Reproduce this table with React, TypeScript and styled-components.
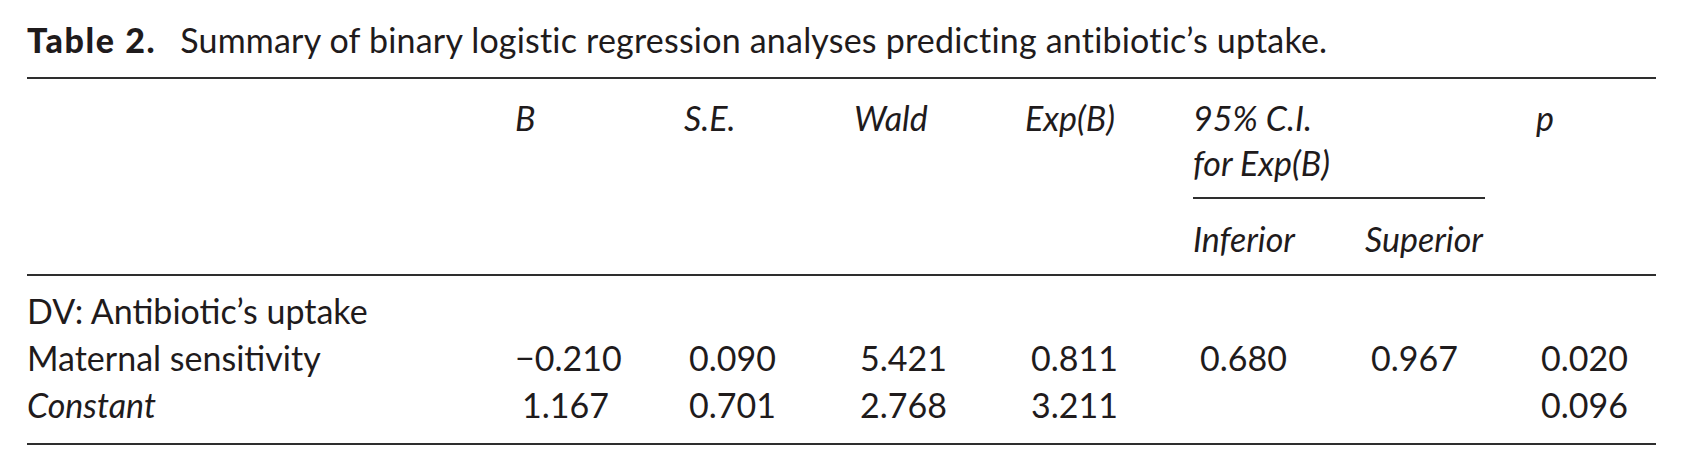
import styled, { createGlobalStyle } from "styled-components";

const GlobalStyle = createGlobalStyle`
  html, body {
    margin: 0;
    padding: 0;
    background: #ffffff;
  }
  body {
    font-family: Lato, "Open Sans", sans-serif;
    color: #1f1b1c;
  }
`;

type Row = {
  label: string;
  italic?: boolean;
  values: string[];
};

const rows: Row[] = [
  { label: "Maternal sensitivity", values: ["\u22120.210", "0.090", "5.421", "0.811", "0.680", "0.967", "0.020"] },
  { label: "Constant", italic: true, values: ["1.167", "0.701", "2.768", "3.211", "", "", "0.096"] },
];

// extra indent of values inside each numeric column
const valueIndent = [0, 5, 6, 6, 7, 6, 5];

const App = () => {
  return (
    <Page>
      <GlobalStyle />
      <Title>
        <strong>Table 2.</strong>
        <span>Summary of binary logistic regression analyses predicting antibiotic’s uptake.</span>
      </Title>
      <Table>
        <colgroup>
          <col style={{ width: 488 }} />
          <col style={{ width: 169 }} />
          <col style={{ width: 170 }} />
          <col style={{ width: 171 }} />
          <col style={{ width: 168 }} />
          <col style={{ width: 172 }} />
          <col style={{ width: 171 }} />
          <col />
        </colgroup>
        <thead>
          <tr>
            <HeadCell rowSpan={2} />
            <HeadCell rowSpan={2}>B</HeadCell>
            <HeadCell rowSpan={2}>S.E.</HeadCell>
            <HeadCell rowSpan={2}>Wald</HeadCell>
            <HeadCell rowSpan={2}>Exp(B)</HeadCell>
            <SpanCell colSpan={2}>
              <SpanLabel>
                95% C.I.
                <br />
                for Exp(B)
              </SpanLabel>
            </SpanCell>
            <HeadCell rowSpan={2}>p</HeadCell>
          </tr>
          <tr>
            <SubHeadCell>Inferior</SubHeadCell>
            <SubHeadCell>Superior</SubHeadCell>
          </tr>
        </thead>
        <tbody>
          <tr>
            <LabelCell $first>DV: Antibiotic’s uptake</LabelCell>
            <Cell colSpan={7} $first />
          </tr>
          {rows.map((row, i) => (
            <tr key={row.label}>
              <LabelCell $italic={row.italic} $last={i === rows.length - 1}>
                {row.label}
              </LabelCell>
              {row.values.map((v, j) => (
                <Cell key={j} $indent={valueIndent[j] + (v === "1.167" ? 7 : 0)} $last={i === rows.length - 1}>
                  {v}
                </Cell>
              ))}
            </tr>
          ))}
        </tbody>
      </Table>
    </Page>
  );
};

export default App;

const Page = styled.div`
  width: 1629px;
  padding: 20px 0 0 27px;
`;

const Title = styled.div`
  font-size: 34px;
  line-height: 40px;
  height: 57px;
  display: flex;
  gap: 24px;
  strong {
    font-weight: 900;
    letter-spacing: 1.6px;
  }
  span {
    letter-spacing: 0.2px;
  }
`;

const Table = styled.table`
  width: 100%;
  border-collapse: collapse;
  table-layout: fixed;
  border-top: 2px solid #2e2e2e;
  border-bottom: 2px solid #2e2e2e;
  font-size: 34px;
  thead {
    border-bottom: 2px solid #2e2e2e;
  }
`;

const HeadCell = styled.th`
  text-align: left;
  vertical-align: top;
  font-weight: 400;
  font-style: italic;
  padding: 16px 0 0;
  line-height: 45px;
`;

const SpanCell = styled.th`
  text-align: left;
  vertical-align: top;
  font-weight: 400;
  font-style: italic;
  padding: 16px 0 0;
`;

const SpanLabel = styled.div`
  line-height: 45px;
  padding-bottom: 12px;
  width: 292px;
  border-bottom: 2px solid #2e2e2e;
`;

const SubHeadCell = styled.th`
  text-align: left;
  font-weight: 400;
  font-style: italic;
  line-height: 45px;
  padding: 17px 0 13px;
`;

const LabelCell = styled.td<{ $italic?: boolean; $first?: boolean; $last?: boolean }>`
  font-style: ${(p) => (p.$italic ? "italic" : "normal")};
  line-height: 47px;
  padding: ${(p) => (p.$first ? "11px" : "0")} 0 ${(p) => (p.$last ? "15px" : "0")};
  white-space: nowrap;
`;

const Cell = styled.td<{ $indent?: number; $first?: boolean; $last?: boolean }>`
  line-height: 47px;
  padding: ${(p) => (p.$first ? "11px" : "0")} 0 ${(p) => (p.$last ? "15px" : "0")} ${(p) => p.$indent ?? 0}px;
  white-space: nowrap;
`;
